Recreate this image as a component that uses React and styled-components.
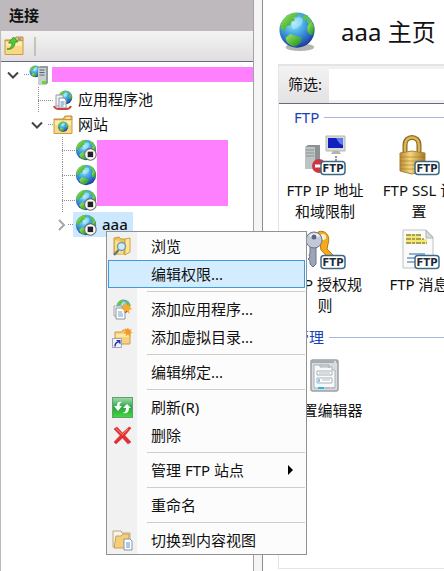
import React from "react";
import styled, { createGlobalStyle } from "styled-components";

const GlobalStyle = createGlobalStyle`
  * { box-sizing: border-box; }
  body {
    margin: 0;
    overflow: hidden;
    background: #fff;
    color: #111;
    font: 15px/21px "Noto Sans", "Noto Sans CJK SC", sans-serif;
  }
  button, input { font: inherit; color: inherit; }
  ul { list-style: none; margin: 0; padding: 0; }
  svg { display: block; flex: none; }
`;

/* ---------- layout ---------- */

const Window = styled.div`
  position: relative;
  display: flex;
  min-height: 100vh;
  overflow: hidden;
`;

const Sidebar = styled.aside`
  flex: none;
  width: 254px;
  border-left: 1px solid #bbb9bb;
  border-right: 1px solid #a3a3a3;
`;

const Splitter = styled.div`
  flex: none;
  width: 9px;
  background: #f5f5f5;
  border-right: 1px solid #8d8d8d;
`;

const SidebarTitle = styled.h2`
  margin: 0;
  padding: 0 8px;
  height: 31px;
  line-height: 31px;
  font-size: 15px;
  font-weight: 600;
  background: #bdb9bc;
`;

const Toolbar = styled.div`
  display: flex;
  align-items: center;
  gap: 10px;
  height: 31px;
  padding: 0 3px;
  background: linear-gradient(#f4f3f4, #e0dedf);
  border-bottom: 1px solid #6d6685;
`;

const ToolButton = styled.button`
  display: flex;
  padding: 0;
  border: 0;
  background: none;
`;

const ToolDivider = styled.span`
  width: 2px;
  height: 19px;
  background: #c5c3b8;
`;

/* ---------- tree ---------- */

const Row = styled.li`
  display: flex;
  align-items: center;
  height: 25px;
  padding-left: ${(p) => p.$indent}px;
`;

const Twisty = styled.button`
  display: flex;
  justify-content: center;
  width: 14px;
  padding: 0;
  border: 0;
  background: none;
`;

const dots = (direction) =>
  `repeating-linear-gradient(${direction}, #8c8c8c 0 1px, transparent 1px 2px)`;

const Stub = styled.span`
  flex: none;
  width: ${(p) => p.$width}px;
  height: 25px;
  background:
    ${dots("to bottom")} 0 0 / 1px 25px no-repeat,
    ${dots("to right")} 0 13px / 100% 1px no-repeat;
`;

const Dash = styled.span`
  flex: none;
  width: 5px;
  height: 1px;
  margin-left: ${(p) => (p.$spaced ? 4 : 0)}px;
  background: ${dots("to right")};
`;

const NodeButton = styled.button`
  display: flex;
  align-items: center;
  gap: 5px;
  height: 25px;
  padding: 0;
  border: 0;
  white-space: nowrap;
  background: none;
`;

const SelectedNode = styled(NodeButton)`
  padding: 0 5px 0 2px;
  background: #cce8ff;
  font-weight: 500;
`;

const ServerMask = styled.span`
  flex: 1;
  height: 15px;
  margin-left: 3px;
  background: #ff80ff;
`;

const Sites = styled.div`
  display: flex;
`;

const SiteMask = styled.span`
  width: 131px;
  height: 66px;
  margin-top: 3px;
  background: #ff80ff;
`;

/* ---------- main pane ---------- */

const Main = styled.main`
  flex: 1;
  min-width: 0;
  display: flex;
  flex-direction: column;
  padding: 0 0 2px 15px;
`;

const PageHeader = styled.header`
  display: flex;
  align-items: center;
  gap: 24px;
  height: 64px;
  white-space: nowrap;
`;

const PageTitle = styled.h1`
  margin: 0;
  font-size: 24px;
  line-height: 32px;
  font-weight: 400;
`;

const Panel = styled.section`
  flex: 1;
  border: solid #e5e3e5;
  border-width: 2px 0 1px 1px;
`;

const FilterBar = styled.form`
  display: flex;
  height: 38px;
  border-bottom: 1px solid #6d6685;
  background: #f2f1f2;
`;

const FilterLabel = styled.label`
  padding: 0 7px 0 9px;
  line-height: 36px;
  white-space: nowrap;
  background: linear-gradient(#f4f3f4, #e3e1e2);
`;

const FilterInput = styled.input`
  flex: 1;
  min-width: 0;
  margin: 3px 0;
  padding: 0 6px;
  border: 0;
  background: #fff;
`;

const FeatureGroup = styled.div`
  padding-bottom: 5px;
`;

const GroupTitle = styled.h3`
  display: flex;
  align-items: center;
  gap: 5px;
  margin: 0;
  padding-left: 15px;
  height: 27px;
  font-size: 15px;
  font-weight: 400;
  color: #1c41b4;
  &::after {
    content: "";
    flex: 1;
    height: 1px;
    background: #aab6df;
  }
`;

const FeatureGrid = styled.div`
  display: grid;
  grid-auto-flow: column;
  grid-auto-columns: 94px;
`;

const Feature = styled.button`
  display: flex;
  flex-direction: column;
  align-items: center;
  gap: 4px;
  height: 94px;
  padding: 4px 8px 0 6px;
  border: 0;
  background: none;
  text-align: center;
`;

/* ---------- context menu ---------- */

const Menu = styled.div`
  position: absolute;
  left: 106px;
  top: 231px;
  width: 201px;
  padding: 0 1px;
  border: 1px solid #929292;
  background: linear-gradient(to right, #f1f1f1 30px, #fcfcfc 30px);
`;

const MenuItem = styled.button`
  display: flex;
  align-items: center;
  gap: 18px;
  width: 100%;
  height: 28px;
  padding: 0 9px 0 3px;
  border: 1px solid ${(p) => (p.$active ? "#3c9ae0" : "transparent")};
  background: ${(p) => (p.$active ? "#d3ecff" : "none")};
  text-align: left;
  white-space: nowrap;
`;

const MenuIcon = styled.span`
  flex: none;
  width: 21px;
  height: 21px;
`;

const MenuText = styled.span`
  flex: 1;
`;

const MenuDivider = styled.hr`
  height: 1px;
  margin: 3px 0 3px 39px;
  border: 0;
  background: #d2cdc6;
`;

/* ---------- drawings ---------- */

const GlobeArt = () => (
  <>
    <defs>
      <radialGradient id="sea" cx="40%" cy="30%" r="72%">
        <stop offset="0" stopColor="#a8ebfb" />
        <stop offset=".4" stopColor="#48aee6" />
        <stop offset=".8" stopColor="#2a62c2" />
        <stop offset="1" stopColor="#1b3794" />
      </radialGradient>
      <linearGradient id="land" x1="0" y1="0" x2="1" y2="1">
        <stop offset="0" stopColor="#a5ec59" />
        <stop offset="1" stopColor="#128a24" />
      </linearGradient>
    </defs>
    <circle cx="20" cy="20" r="18.5" fill="url(#sea)" />
    <path d="M3 19C2 10 9 3 18 2l4 1-2 3-4 1 2 3-4 1-1 4-4 1-2 5-3-1z" fill="url(#land)" />
    <path d="M27 3l6 4 3 5-3 2-3-3 1-3-3 2-2-3z" fill="#5bc64b" />
    <path d="M33 13c3-2 5 1 5 6 0 4-2 7-4 6-3-2-5-8-1-12z" fill="url(#land)" />
    <path d="M8 28l5-4 5 2 7 2-1 5-5 4c-5 1-11-4-11-9z" fill="url(#land)" />
    <path d="M17 10c4-5 9-4 9 0 0 5-6 9-10 9-3-1-1-6 1-9z" fill="#c9f4ff" opacity=".45" />
  </>
);

const Globe = ({ size = 20, stopped }) => (
  <svg width={size} height={size} viewBox="0 0 40 40">
    <GlobeArt />
    {stopped && (
      <>
        <circle cx="28" cy="28" r="10.500" fill="#fff" stroke="#6c6c6c" strokeWidth="2" />
        <rect x="23" y="23" width="10" height="10" fill="#222" />
      </>
    )}
  </svg>
);

const PageGlobe = () => (
  <svg width="39" height="42" viewBox="0 0 41 44">
    <ellipse cx="23" cy="38" rx="15" ry="4" fill="#777" opacity=".55" />
    <GlobeArt />
  </svg>
);

const FolderShape = () => (
  <>
    <path d="M1 5V4h9l2-3h7v4z" fill="#e8bf65" stroke="#bd913f" />
    <path d="M1 4.5h18v14H1z" fill="#f9d985" stroke="#c99b49" />
    <path d="M2 6h16v4H2z" fill="#ffebaf" />
  </>
);

const UpFolder = () => (
  <svg width="20" height="20" viewBox="0 0 20 20">
    <FolderShape />
    <path d="M14 3h3" stroke="#5a9bd6" strokeWidth="1.5" />
    <path d="M3 13c4 0 5-3 5-6H4.500L9.500 1 14 6h-3c0 5-3 8-8 7z" fill="#55ca3b" stroke="#258f21" strokeWidth=".8" />
  </svg>
);

const SiteFolder = () => (
  <svg width="20" height="20" viewBox="0 0 20 20">
    <FolderShape />
    <path d="M13 3h4" stroke="#fff1c2" strokeWidth="1.500" />
    <g transform="translate(4.500 6) scale(.28)">
      <GlobeArt />
    </g>
  </svg>
);

const ServerIcon = () => (
  <svg width="20" height="20" viewBox="0 0 20 20">
    <g transform="scale(.32)">
      <GlobeArt />
    </g>
    <path d="M9 3l2-2h8v17l-2 2H9z" fill="#929ba2" />
    <path d="M9 3h8v17H9z" fill="#c7cfd3" />
    <path d="M10.500 5h5M10.500 7.500h5M10.500 10h5" stroke="#59646d" />
    <rect x="13" y="16" width="4" height="3" fill="#61dd20" />
  </svg>
);

const PoolIcon = () => (
  <svg width="20" height="20" viewBox="0 0 20 20">
    <g transform="translate(5 0) scale(.37)">
      <GlobeArt />
    </g>
    <path d="M3 5h7v11H3z" fill="#f2f3f5" stroke="#969ba4" />
    <path d="M6 8h5l2 2v8H6z" fill="#fff" stroke="#8b939f" />
    <path d="M7.500 12h4M7.500 14h4M7.500 16h3" stroke="#4f86c4" />
    <path d="M1 16c1 3 4 3 5 3M18 16c-1 3-3 3-5 3M6 19h7" fill="none" stroke="#c8453e" strokeWidth="2" />
  </svg>
);

const Chevron = ({ open }) => (
  <svg width="12" height="12" viewBox="0 0 12 12" fill="none" strokeWidth="2">
    <path d={open ? "M1 3.500l5 5 5-5" : "M4 1l5 5-5 5"} stroke={open ? "#444" : "#a6a6a6"} />
  </svg>
);

const BrowseIcon = () => (
  <svg width="21" height="21" viewBox="0 0 21 21">
    <path d="M2 2l5-1 2 2h4v15H2z" fill="#e9c35f" stroke="#c79a3a" />
    <path d="M13 3l5-1v14l-5 3z" fill="#ffe694" stroke="#c9a247" />
    <path d="M3 4l8 2v12l-8-1z" fill="#fbe08a" />
    <circle cx="9.500" cy="10.500" r="4" fill="#cfeaf8" stroke="#7f99a8" strokeWidth="1.500" />
    <path d="M6.500 14L2 19" stroke="#66727a" strokeWidth="2.200" />
  </svg>
);

const starPath = "M0-6L1.500-2 5-4 3-.500 6 1 2.500 2 3 6 0 3-3 5-2.500 1.500-6 1-3-1-4-5-1.500-3z";

const AddAppIcon = () => (
  <svg width="21" height="21" viewBox="0 0 21 21">
    <g transform="translate(4 0) scale(.37)">
      <GlobeArt />
    </g>
    <path d="M2 7h8v10H2z" fill="#f4f5f6" stroke="#a4a9ae" />
    <path d="M4 9h6l3 3v8H4z" fill="#fff" stroke="#8c949e" />
    <path d="M6 13h4M6 15h5M6 17h5" stroke="#6f9fcc" />
    <path d={starPath} transform="translate(14.500 9)" fill="#ffa928" />
  </svg>
);

const AddDirIcon = () => (
  <svg width="21" height="21" viewBox="0 0 21 21">
    <path d="M3 5h7l1-2h7v14H3z" fill="#f7d27a" stroke="#c99b49" />
    <path d="M4 7h13v3H4z" fill="#ffe6a4" />
    <path d={starPath} transform="translate(16 5) scale(.8)" fill="#f59a26" />
    <path d="M.5 11.500h9v9h-9z" fill="#f2f3ff" stroke="#a0a3ba" />
    <path d="M3 19.500c0-3 1-4 3-4.500" fill="none" stroke="#2938a5" strokeWidth="1.500" />
    <path d="M4 13h4.500v4.500z" fill="#2938a5" />
  </svg>
);

const RefreshIcon = () => (
  <svg width="21" height="21" viewBox="0 0 21 21">
    <defs>
      <linearGradient id="refresh" x2="0" y2="1">
        <stop offset="0" stopColor="#a3dcae" />
        <stop offset=".5" stopColor="#26a443" />
        <stop offset="1" stopColor="#4ad83a" />
      </linearGradient>
    </defs>
    <rect x=".5" y=".5" width="20" height="20" fill="url(#refresh)" stroke="#5fa070" />
    <path d="M10 5C6 4 5 6 5 9H2l4 5 4-5H7.500c0-2 .5-3 2.500-4z" fill="#fff" />
    <path d="M11 16c4 1 6-1 6-5h2l-4-4-4 4h3c0 3-1 4-3 5z" fill="#fff" />
  </svg>
);

const DeleteIcon = () => (
  <svg width="21" height="21" viewBox="0 0 21 21">
    <path d="M2 4l3-2 5.500 6L17 2l2 1-6 7.500 6 6.500-3 2-5.500-6L4 19l-2-2 6-6.500z" fill="#e62d2d" stroke="#d0494a" strokeWidth=".7" />
    <path d="M4 3.500l6.500 6.300L16 4" fill="none" stroke="#ff8d85" />
  </svg>
);

const ContentIcon = () => (
  <svg width="21" height="21" viewBox="0 0 21 21">
    <path d="M1 4V1h8l1 2h8v14H1z" fill="#f5f4ef" stroke="#b7a981" />
    <path d="M2 18l2-12h5l2-2h6v14z" fill="#f4cf77" stroke="#c6a05b" />
    <path d="M12 9h6l2 2v9h-8z" fill="#fff" stroke="#8894a5" />
    <path d="M14 13h4M14 15h4M14 17h4" stroke="#568ed4" />
  </svg>
);

const FtpBadge = () => (
  <>
    <rect x="16" y="26.500" width="24" height="13" rx="3" fill="#fff" stroke="#3f6885" strokeWidth="1.500" />
    <text x="28" y="37" textAnchor="middle" fontFamily="DejaVu Sans, sans-serif" fontSize="10" fontWeight="700" fill="#1d2b36">
      FTP
    </text>
  </>
);

const FeatureSvg = ({ children }) => (
  <svg width="41" height="41" viewBox="0 0 41 41">
    {children}
  </svg>
);

const IpIcon = () => (
  <FeatureSvg>
    <path d="M0 12l3-2h12v21l-3 3H0z" fill="#8d9292" />
    <path d="M0 12h10v22H0z" fill="#bec4c4" />
    <path d="M1 15h8M1 18h8M1 21h8" stroke="#8a9292" />
    <path d="M21 1h19v15H21z" fill="#d7dad5" stroke="#b5b8b1" />
    <path d="M23 3h15v10H23z" fill="#101fbd" />
    <path d="M31 3h7v7c-4-1-5-4-7-7z" fill="#5b7cf0" />
    <path d="M28 16h6l2 3H26z" fill="#b3b6af" />
    <path d="M31 21v5" stroke="#222" strokeDasharray="2 1" />
    <circle cx="14" cy="31" r="7" fill="#cf3540" />
    <path d="M10 31h8" stroke="#fff" strokeWidth="3" />
    <FtpBadge />
  </FeatureSvg>
);

const LockIcon = () => (
  <FeatureSvg>
    <defs>
      <linearGradient id="brass">
        <stop offset="0" stopColor="#b98a30" />
        <stop offset=".4" stopColor="#f5d77e" />
        <stop offset="1" stopColor="#a87720" />
      </linearGradient>
    </defs>
    <path d="M6 19V10c0-10 14-10 14 0v10" fill="none" stroke="#8c6a22" strokeWidth="5" />
    <path d="M6 19V10c0-10 14-10 14 0v10" fill="none" stroke="#d9b553" strokeWidth="2.500" />
    <path d="M1 18l12-2 13 2v18l-13 3-12-3z" fill="url(#brass)" stroke="#a98335" />
    <path d="M1 22h25M1 26h25M1 30h25M1 34h25" stroke="#9b722a" opacity=".55" />
    <FtpBadge />
  </FeatureSvg>
);

const KeysIcon = () => (
  <FeatureSvg>
    <path d="M13 3c7-3 13 4 10 12l-1 5 15 15-4 4-17-18z" fill="#f5a91c" stroke="#b97511" />
    <circle cx="18" cy="8" r="3" fill="#fff4ce" />
    <path d="M5 17h6v18l-3 3-3-3v-3l-2-2 2-2-1-2 1-2z" fill="#9ba5b7" stroke="#68748a" />
    <circle cx="9" cy="11" r="8" fill="#c1c8d7" stroke="#69758c" />
    <path d="M4 7c3-4 9-3 11 0l-5 3z" fill="#eef2f7" />
    <circle cx="9" cy="8" r="2.500" fill="#5c677d" />
    <FtpBadge />
  </FeatureSvg>
);

const MessageIcon = () => (
  <FeatureSvg>
    <path d="M4 1h23l7 7v31H4z" fill="#fafafa" stroke="#c0c2c4" />
    <path d="M27 1v8h7z" fill="#dadddf" stroke="#aeb1b4" />
    <path d="M7 5h15v10H7zM22 10h6v5h-6z" fill="#f3e875" />
    <path d="M7 6h15M7 10h18M7 14h21" stroke="#5f5b2f" strokeDasharray="5 1 3 1" />
    <path d="M10 25h16M8 29h8M8 33h8" stroke="#7096c7" strokeWidth="1.500" />
    <FtpBadge />
  </FeatureSvg>
);

const ConfigIcon = () => (
  <FeatureSvg>
    <rect x="6" y="5" width="27" height="31" rx="2" fill="#d8dcdf" stroke="#9a9fa4" strokeWidth="1.500" />
    <path d="M7 7h25" stroke="#737e89" strokeDasharray="22 2" />
    <path d="M9 13V10h6v2h12v3h3v18H9z" fill="#f8f9fa" stroke="#aab0b6" />
    <path d="M15 10h9v3" fill="none" stroke="#a6acb2" />
    <path d="M12 16h15v4H12zM12 23h15v5H12z" fill="#fff" stroke="#a9afb5" />
    <path d="M14 18h11M17 25h8" stroke="#b4babf" />
    <path d="M14 24v3" stroke="#46c6ec" strokeWidth="1.500" />
    <path d="M13 33h6" stroke="#22bbed" strokeWidth="2" />
    <path d="M20 33h10" stroke="#babfc4" strokeWidth="2" strokeDasharray="5 1" />
  </FeatureSvg>
);

/* ---------- data ---------- */

const menuGroups = [
  [{ text: "浏览", Icon: BrowseIcon }, { text: "编辑权限...", active: true }],
  [{ text: "添加应用程序...", Icon: AddAppIcon }, { text: "添加虚拟目录...", Icon: AddDirIcon }],
  [{ text: "编辑绑定..." }],
  [{ text: "刷新(R)", Icon: RefreshIcon }, { text: "删除", Icon: DeleteIcon }],
  [{ text: "管理 FTP 站点", submenu: true }],
  [{ text: "重命名" }],
  [{ text: "切换到内容视图", Icon: ContentIcon }],
];

const featureGroups = [
  {
    title: "FTP",
    rows: [
      [["FTP IP 地址和域限制", IpIcon], ["FTP SSL 设置", LockIcon]],
      [["FTP 授权规则", KeysIcon], ["FTP 消息", MessageIcon]],
    ],
  },
  { title: "管理", rows: [[["配置编辑器", ConfigIcon]]] },
];

function ContextMenu() {
  return (
    <Menu role="menu">
      {menuGroups.map((group, i) => (
        <React.Fragment key={i}>
          {i > 0 && <MenuDivider />}
          {group.map(({ text, Icon, active, submenu }) => (
            <MenuItem key={text} role="menuitem" $active={active}>
              <MenuIcon>{Icon && <Icon />}</MenuIcon>
              <MenuText>{text}</MenuText>
              {submenu && (
                <svg width="8" height="10" viewBox="0 0 8 10">
                  <path d="M1 0l5 5-5 5z" />
                </svg>
              )}
            </MenuItem>
          ))}
        </React.Fragment>
      ))}
    </Menu>
  );
}

export default function App() {
  return (
    <Window>
      <GlobalStyle />
      <Sidebar>
        <SidebarTitle>连接</SidebarTitle>
        <Toolbar>
          <ToolButton aria-label="连接">
            <UpFolder />
          </ToolButton>
          <ToolDivider />
        </Toolbar>
        <ul>
          <Row $indent={5}>
            <Twisty aria-label="折叠"><Chevron open /></Twisty>
            <Dash $spaced />
            <ServerIcon />
            <ServerMask />
          </Row>
          <Row $indent={37}>
            <Stub $width={15} />
            <NodeButton><PoolIcon />应用程序池</NodeButton>
          </Row>
          <Row $indent={29}>
            <Twisty aria-label="折叠"><Chevron open /></Twisty>
            <Dash $spaced />
            <NodeButton><SiteFolder />网站</NodeButton>
          </Row>
        </ul>
        <Sites>
          <ul>
            {[true, false, true].map((stopped, i) => (
              <Row key={i} $indent={61}>
                <Stub $width={13} />
                <Globe size={22} stopped={stopped} />
              </Row>
            ))}
          </ul>
          <SiteMask />
        </Sites>
        <ul>
          <Row $indent={53}>
            <Twisty aria-label="展开"><Chevron /></Twisty>
            <Dash />
            <SelectedNode><Globe size={22} stopped />aaa</SelectedNode>
          </Row>
        </ul>
      </Sidebar>
      <Splitter />
      <Main>
        <PageHeader>
          <PageGlobe />
          <PageTitle>aaa 主页</PageTitle>
        </PageHeader>
        <Panel>
          <FilterBar>
            <FilterLabel htmlFor="filter">筛选:</FilterLabel>
            <FilterInput id="filter" />
          </FilterBar>
          {featureGroups.map((group) => (
            <FeatureGroup key={group.title}>
              <GroupTitle>{group.title}</GroupTitle>
              {group.rows.map((row, i) => (
                <FeatureGrid key={i}>
                  {row.map(([label, Icon]) => (
                    <Feature key={label}>
                      <Icon />
                      <span>{label}</span>
                    </Feature>
                  ))}
                </FeatureGrid>
              ))}
            </FeatureGroup>
          ))}
        </Panel>
      </Main>
      <ContextMenu />
    </Window>
  );
}
